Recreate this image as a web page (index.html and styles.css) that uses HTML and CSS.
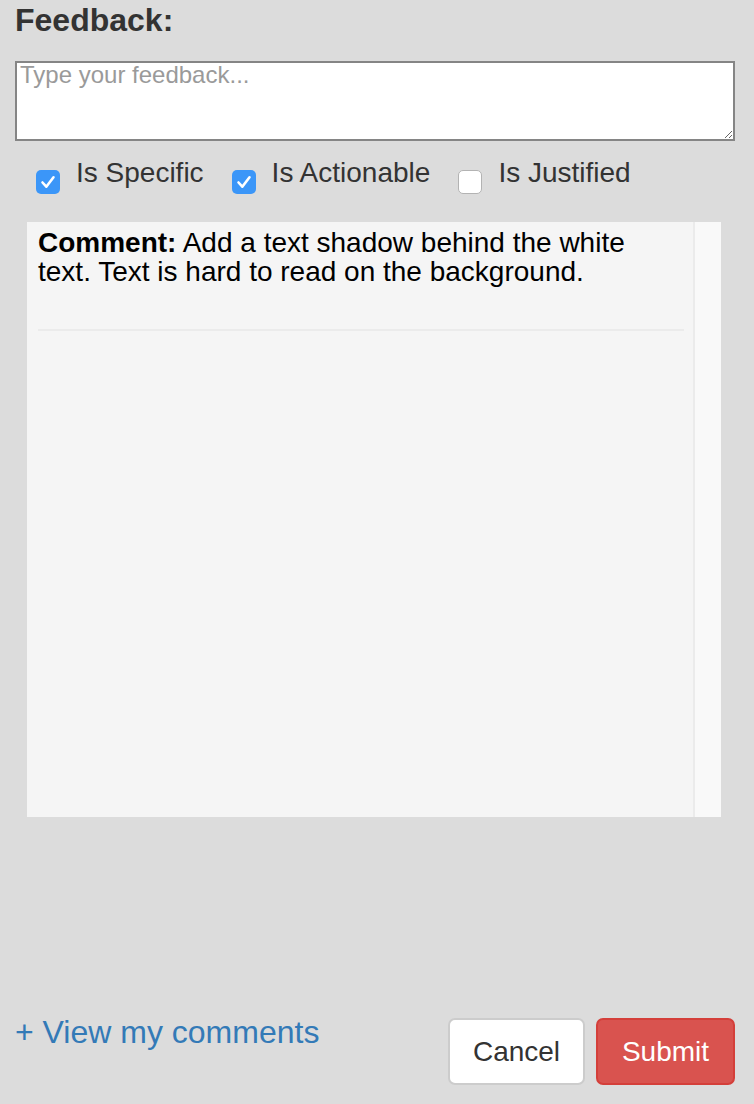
FILE: index.html
```html
<!DOCTYPE html>
<html lang="en">
<head>
<meta charset="utf-8">
<title>Feedback</title>
<link rel="stylesheet" href="styles.css">
</head>
<body>
<div class="page">
  <h2 class="title">Feedback:</h2>
  <textarea class="feedback-input" placeholder="Type your feedback..."></textarea>
  <div class="checks">
    <label class="check">
      <span class="box box-on"><svg viewBox="0 0 24 24" width="24" height="24"><path d="M6.5 12.5l3.8 4.2 7.2-9.4" fill="none" stroke="#fff" stroke-width="2.6" stroke-linecap="round" stroke-linejoin="round"/></svg></span>
      <span class="check-text">Is Specific</span>
    </label>
    <label class="check">
      <span class="box box-on"><svg viewBox="0 0 24 24" width="24" height="24"><path d="M6.5 12.5l3.8 4.2 7.2-9.4" fill="none" stroke="#fff" stroke-width="2.6" stroke-linecap="round" stroke-linejoin="round"/></svg></span>
      <span class="check-text">Is Actionable</span>
    </label>
    <label class="check">
      <span class="box box-off"></span>
      <span class="check-text">Is Justified</span>
    </label>
  </div>
  <div class="panel">
    <div class="panel-main">
      <div class="comment">
        <p class="comment-text"><strong>Comment:</strong> Add a text shadow behind the white text. Text is hard to read on the background.</p>
      </div>
    </div>
    <div class="panel-side"></div>
  </div>
  <div class="footer">
    <a class="view-link" href="#">+ View my comments</a>
    <div class="actions">
      <button class="btn btn-cancel" type="button">Cancel</button>
      <button class="btn btn-submit" type="button">Submit</button>
    </div>
  </div>
</div>
</body>
</html>
```

FILE: styles.css
```css
html, body {
  margin: 0;
  padding: 0;
  background: #dcdcdc;
}

.page {
  box-sizing: border-box;
  height: 1104px;
  padding: 2px 19px 19px 15px;
  display: flex;
  flex-direction: column;
  font-family: "Liberation Sans", Arial, Helvetica, sans-serif;
  color: #333;
}

.title {
  margin: 0;
  font-size: 32px;
  line-height: 36px;
  font-weight: bold;
  color: #333;
}

.feedback-input {
  display: block;
  box-sizing: border-box;
  margin: 23px 0 0 0;
  width: 720px;
  height: 80px;
  border: 2px solid #858585;
  background: #fff;
  padding: 0 3px;
  font-family: "Liberation Sans", Arial, sans-serif;
  font-size: 24px;
  line-height: 24px;
  color: #333;
  resize: vertical;
  outline: none;
}

.feedback-input::placeholder {
  color: #9a9a9a;
}

.checks {
  display: flex;
  align-items: flex-start;
  gap: 28px;
  margin-top: 16px;
  padding-left: 21px;
}

.check {
  display: flex;
  align-items: flex-start;
  gap: 16px;
}

.box {
  box-sizing: border-box;
  width: 24px;
  height: 24px;
  margin-top: 13px;
  border-radius: 5px;
  display: flex;
}

.box-on {
  background: #3b96f8;
}

.box-off {
  background: #fff;
  border: 1px solid #b3b3b3;
}

.check-text {
  font-size: 28px;
  line-height: 32px;
  color: #333;
}

.panel {
  margin: 28px 14px 0 12px;
  height: 595px;
  display: flex;
}

.panel-main {
  flex: 1;
  background: #f5f5f5;
  border-right: 2px solid #ebebeb;
  padding: 6px 9px 0 11px;
}

.panel-side {
  width: 26px;
  background: #f9f9f9;
}

.comment {
  border-bottom: 2px solid #ebebeb;
  padding-bottom: 43px;
}

.comment-text {
  margin: 0;
  font-size: 28px;
  line-height: 29px;
  color: #000;
}

.footer {
  margin-top: auto;
  display: flex;
  justify-content: space-between;
  align-items: flex-start;
}

.view-link {
  font-size: 32px;
  line-height: 36px;
  color: #337ab7;
  text-decoration: none;
}

.actions {
  display: flex;
  gap: 11px;
  margin-top: 4px;
}

.btn {
  box-sizing: border-box;
  height: 67px;
  border-radius: 7px;
  font-family: "Liberation Sans", Arial, sans-serif;
  font-size: 28px;
  padding: 0;
  display: flex;
  align-items: center;
  justify-content: center;
}

.btn-cancel {
  width: 137px;
  background: #fff;
  border: 2px solid #cccccc;
  color: #333;
}

.btn-submit {
  width: 139px;
  background: #d9534f;
  border: 2px solid #d43f3a;
  color: #fff;
}
```
